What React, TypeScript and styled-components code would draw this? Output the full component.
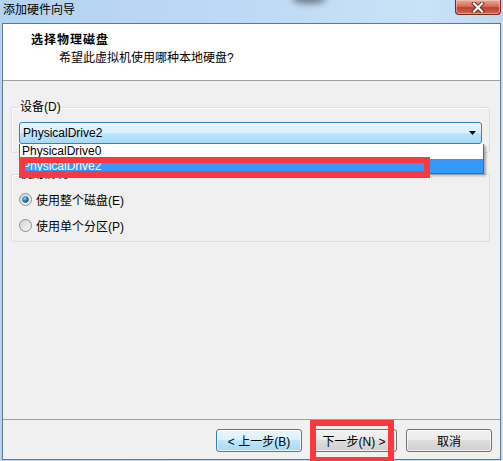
import styled, { createGlobalStyle } from "styled-components";

const Global = createGlobalStyle`
  html, body { margin: 0; padding: 0; }
  body {
    background: #b9d6f0;
    font-family: "Liberation Sans", "Noto Sans CJK SC", sans-serif;
    font-size: 12px;
    color: #000;
  }
`;

const Frame = styled.div`
  width: 503px;
  height: 461px;
  display: flex;
  flex-direction: column;
  overflow: hidden;
  background: linear-gradient(90deg, #b6d4ef 0%, #bcd9f4 40%, #c6e0f6 100%);
`;

const TitleBar = styled.div`
  position: relative;
  height: 23px;
  display: flex;
  align-items: center;
  justify-content: space-between;
  padding-left: 3px;
  background: linear-gradient(90deg, #b4d3f0 0%, #bcd9f5 45%, #c9e2f7 85%, #bed8ef 100%);
`;

const TitleText = styled.span`
  font-size: 12px;
  line-height: 16px;
  margin-top: -3px;
  color: #000;
`;

const Smudge = styled.div`
  position: absolute;
  left: 292px;
  top: -6px;
  width: 34px;
  height: 10px;
  border-radius: 50%;
  background: #5c6470;
  filter: blur(3px);
  opacity: 0.8;
`;

const CloseButton = styled.div`
  align-self: flex-start;
  width: 44px;
  height: 14px;
  margin-right: 2px;
  display: flex;
  align-items: center;
  justify-content: center;
  border: 1px solid #6e2a22;
  border-top: none;
  border-radius: 0 0 4px 4px;
  background: linear-gradient(180deg, #e9a99b 0%, #d56d5c 45%, #c0402c 55%, #cf6a52 100%);
  box-shadow: inset 0 0 0 1px rgba(255, 210, 200, 0.5);
`;

const Client = styled.div`
  flex: 1;
  margin: 0 2px 1px 2px;
  border: 1px solid #64768a;
  display: flex;
  flex-direction: column;
  background: #f0f0f0;
`;

const Header = styled.div`
  height: 57px;
  background: #fff;
  border-bottom: 1px solid #a0a0a0;
  padding: 8px 0 0 28px;
  box-sizing: border-box;
`;

const HeadTitle = styled.div`
  font-weight: bold;
  font-size: 12px;
  line-height: 16px;
  letter-spacing: 1px;
`;

const HeadSub = styled.div`
  margin: 2px 0 0 28px;
  font-size: 12px;
  line-height: 16px;
`;

const Body = styled.div`
  flex: 1;
  padding: 18px 10px 0 8px;
  display: flex;
  flex-direction: column;
`;

const Group = styled.fieldset<{ $gap?: number; $pb: number }>`
  margin: ${(p) => p.$gap ?? 0}px 0 0 0;
  padding: 0 7px ${(p) => p.$pb}px 7px;
  border: 1px solid #d5dfe5;
  border-radius: 3px;
  box-shadow: inset 1px 1px 0 #fff;
  min-width: 0;
  position: relative;
`;

const Legend = styled.legend`
  padding: 0 1px;
  font-size: 12px;
  line-height: 16px;
`;

const ComboWrap = styled.div`
  position: relative;
  margin-top: 7px;
  z-index: 2;
`;

const Combo = styled.div`
  height: 22px;
  box-sizing: border-box;
  border: 1px solid #3c7fb1;
  border-radius: 3px;
  display: flex;
  align-items: center;
  justify-content: space-between;
  padding: 0 5px 0 3px;
  background: linear-gradient(180deg, #eaf6fd 0%, #d9f0fc 50%, #bee6fd 50%, #a7d9f5 100%);
  font-size: 12px;
`;

const DropList = styled.div`
  position: absolute;
  left: 0;
  top: 22px;
  width: 465px;
  height: 30px;
  box-sizing: border-box;
  background: #fff;
  border: 1px solid #646464;
  border-top: none;
  box-shadow: 2px 2px 2px rgba(0, 0, 0, 0.3);
`;

const Item = styled.div<{ $sel?: boolean }>`
  height: ${(p) => (p.$sel ? 14 : 15)}px;
  line-height: ${(p) => (p.$sel ? 14 : 15)}px;
  padding-left: 2px;
  font-size: 12px;
  background: ${(p) => (p.$sel ? "#3399ff" : "transparent")};
  color: ${(p) => (p.$sel ? "#fff" : "#000")};
`;

const Mark = styled.div`
  position: absolute;
  border: 6px solid #fb383d;
  border-bottom-width: 7px;
  box-sizing: border-box;
  pointer-events: none;
  z-index: 5;
`;

const RadioRow = styled.label<{ $top: number }>`
  display: flex;
  align-items: center;
  gap: 4px;
  height: 16px;
  margin-top: ${(p) => p.$top}px;
  font-size: 12px;
`;

const Footer = styled.div`
  height: 40px;
  box-sizing: border-box;
  border-top: 1px solid #a0a0a0;
  padding: 9px 8px 0 0;
  display: flex;
  justify-content: flex-end;
  gap: 9px;
`;

const Button = styled.div<{ $focus?: boolean }>`
  position: relative;
  width: 86px;
  height: 23px;
  box-sizing: border-box;
  border: 1px solid ${(p) => (p.$focus ? "#3c7fb1" : "#707070")};
  border-radius: 3px;
  display: flex;
  align-items: center;
  justify-content: center;
  font-size: 12px;
  background: ${(p) =>
    p.$focus
      ? "linear-gradient(180deg, #eaf6fd 0%, #d9f0fc 50%, #bee6fd 50%, #a7d9f5 100%)"
      : "linear-gradient(180deg, #f2f2f2 0%, #ebebeb 50%, #dddddd 50%, #cfcfcf 100%)"};
  box-shadow: inset 0 0 0 1px rgba(255, 255, 255, 0.7);
`;

function Radio({ checked }: { checked?: boolean }) {
  return (
    <svg width="13" height="13" viewBox="0 0 13 13">
      <defs>
        <linearGradient id="rb" x1="0" y1="0" x2="1" y2="1">
          <stop offset="0" stopColor="#cfd3d8" />
          <stop offset="1" stopColor="#f7f7f7" />
        </linearGradient>
        <radialGradient id="rd" cx="0.4" cy="0.35" r="0.7">
          <stop offset="0" stopColor="#9fd8f8" />
          <stop offset="0.5" stopColor="#2b7cbb" />
          <stop offset="1" stopColor="#174e7e" />
        </radialGradient>
      </defs>
      <circle cx="6.5" cy="6.5" r="6" fill="url(#rb)" stroke="#8e8f8f" strokeWidth="1" />
      {checked && <circle cx="6.5" cy="6.5" r="3.2" fill="url(#rd)" />}
    </svg>
  );
}

export default function App() {
  return (
    <>
      <Global />
      <Frame>
        <TitleBar>
          <Smudge />
          <TitleText>添加硬件向导</TitleText>
          <CloseButton>
            <svg width="14" height="11" viewBox="0 0 14 11">
              <path d="M3 1.5 L11 9.5 M11 1.5 L3 9.5" stroke="#5a2a22" strokeWidth="4" strokeLinecap="square" />
              <path d="M3 1.5 L11 9.5 M11 1.5 L3 9.5" stroke="#fff" strokeWidth="2.2" strokeLinecap="square" />
            </svg>
          </CloseButton>
        </TitleBar>
        <Client>
          <Header>
            <HeadTitle>选择物理磁盘</HeadTitle>
            <HeadSub>希望此虚拟机使用哪种本地硬盘?</HeadSub>
          </Header>
          <Body>
            <Group $pb={8}>
              <Legend>设备(D)</Legend>
              <ComboWrap>
                <Combo>
                  <span>PhysicalDrive2</span>
                  <svg width="7" height="4" viewBox="0 0 7 4">
                    <path d="M0 0 H7 L3.5 4 Z" fill="#000" />
                  </svg>
                </Combo>
                <DropList>
                  <Item>PhysicalDrive0</Item>
                  <Item $sel>PhysicalDrive2</Item>
                  <Mark style={{ left: -1, top: 13, width: 411, height: 21 }} />
                </DropList>
              </ComboWrap>
            </Group>
            <Group $gap={13} $pb={8}>
              <Legend>使用情况</Legend>
              <RadioRow $top={9}>
                <Radio checked />
                使用整个磁盘(E)
              </RadioRow>
              <RadioRow $top={10}>
                <Radio />
                使用单个分区(P)
              </RadioRow>
            </Group>
          </Body>
          <Footer>
            <Button $focus>&lt; 上一步(B)</Button>
            <Button>
              下一步(N) &gt;
              <Mark style={{ left: -2, top: -10, width: 84, height: 44 }} />
            </Button>
            <Button>取消</Button>
          </Footer>
        </Client>
      </Frame>
    </>
  );
}
